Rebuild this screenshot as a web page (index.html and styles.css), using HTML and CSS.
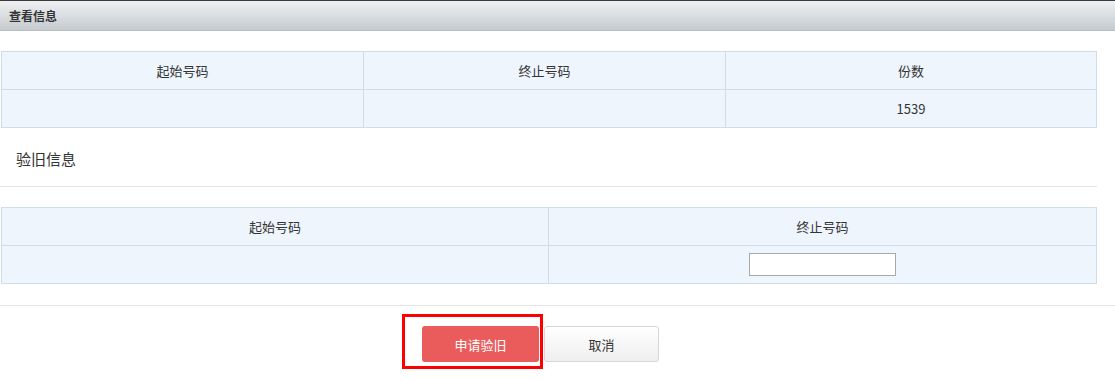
FILE: index.html
```html
<!DOCTYPE html>
<html lang="zh-CN">
<head>
    <meta charset="UTF-8">
    <title>查看信息</title>
    <link rel="stylesheet" href="styles.css">
</head>
<body>
    <div class="panel-head">查看信息</div>

    <div class="panel-body">
        <table class="info-table cols-3">
            <tr>
                <td>起始号码</td>
                <td>终止号码</td>
                <td>份数</td>
            </tr>
            <tr>
                <td></td>
                <td></td>
                <td>1539</td>
            </tr>
        </table>

        <div class="section-title">验旧信息</div>

        <table class="info-table cols-2">
            <tr>
                <td>起始号码</td>
                <td>终止号码</td>
            </tr>
            <tr>
                <td></td>
                <td><input type="text" class="num-input"></td>
            </tr>
        </table>
    </div>

    <div class="btn-bar">
        <div class="btn-group">
            <button class="btn btn-primary">申请验旧</button>
            <button class="btn btn-default">取消</button>
            <span class="mark-box"></span>
        </div>
    </div>
</body>
</html>
```

FILE: styles.css
```css
body { margin: 0; background: #fff; color: #333; font-family: "Noto Sans CJK SC", "Liberation Sans", sans-serif; font-size: 13px; }
.panel-head { height: 29px; line-height: 29px; padding-left: 9px; border-top: 1px solid #3a3a3a; background: linear-gradient(#eef0f2, #c6cbd0); border-bottom: 1px solid #b9bec3; font-size: 12px; font-weight: bold; color: #333; }
.panel-body { width: 1096px; padding-left: 1px; padding-top: 20px; }
.info-table { width: 1096px; border-collapse: collapse; table-layout: fixed; background: #eef5fd; }
.info-table td { height: 37px; padding: 0; border: 1px solid #cfdde9; text-align: center; color: #333; }
.cols-3 td:nth-child(1) { width: 361px; }
.cols-3 td:nth-child(2) { width: 361px; }
.cols-2 td:nth-child(1) { width: 546px; }
.section-title { margin-left: -1px; height: 58px; line-height: 62px; padding-left: 16px; font-size: 15px; color: #333; border-bottom: 1px solid #e6e6e6; margin-bottom: 20px; width: 1081px; }
.num-input { width: 145px; height: 21px; padding: 0; border: 1px solid #a9a9a9; background: #fff; vertical-align: middle; }
.btn-bar { margin-top: 21px; border-top: 1px solid #e6e6e6; padding-top: 20px; padding-bottom: 17px; }
.btn-group { position: relative; display: flex; gap: 5px; padding-left: 422px; }
.btn { height: 36px; border-radius: 3px; font-family: inherit; font-size: 13px; cursor: pointer; }
.btn-primary { width: 117px; border: none; background: #ea5c5c; color: #fff; }
.btn-default { width: 115px; border: 1px solid #d6d6d6; background: linear-gradient(#ffffff, #efefef); color: #333; }
.mark-box { position: absolute; left: 402px; top: -12px; width: 135px; height: 49px; border: 3px solid #ff0000; pointer-events: none; }
```
